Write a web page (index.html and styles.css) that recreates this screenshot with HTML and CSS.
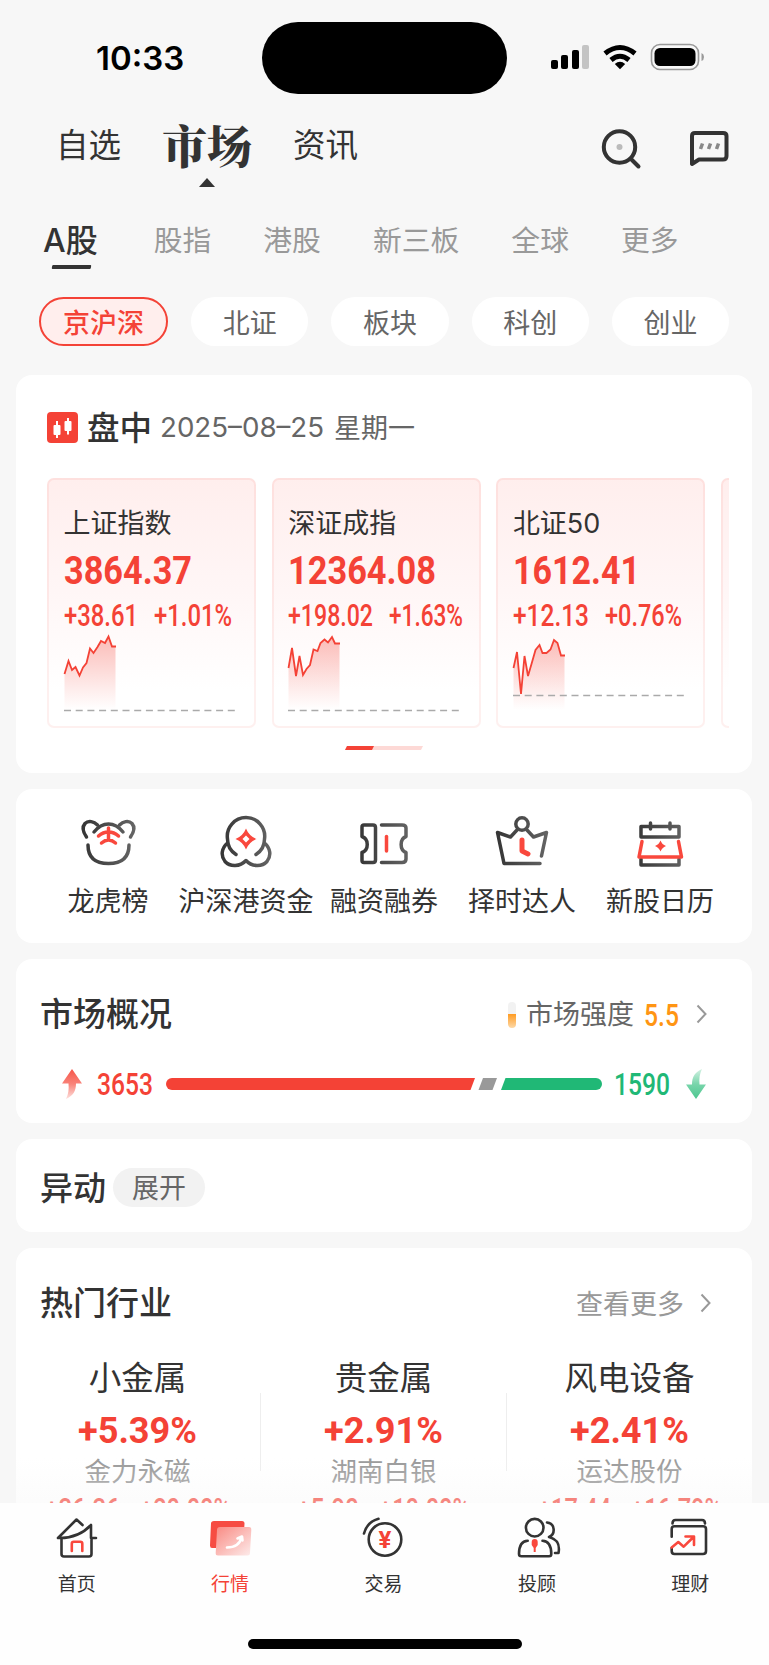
FILE: index.html
```
<!DOCTYPE html>
<html lang="zh-CN">
  <head>
    <meta charset="utf-8">
    <title>市场</title>
    <link rel="stylesheet" href="styles.css">
  </head>
  <body>
    <!-- gradients shared by the icons -->
    <svg class="defs" width="0" height="0">
      <defs>
        <linearGradient id="fall" x1="0" y1="0" x2="0" y2="1">
          <stop offset="0" stop-color="#f44236" stop-opacity=".34"/>
          <stop offset="1" stop-color="#f44236" stop-opacity="0"/>
        </linearGradient>
        <linearGradient id="ink" gradientUnits="userSpaceOnUse" x1="0" y1="0" x2="56" y2="0">
          <stop offset="0" stop-color="#333"/>
          <stop offset="1" stop-color="#666"/>
        </linearGradient>
        <linearGradient id="up" x1="0" y1="0" x2="0" y2="1">
          <stop offset="0" stop-color="#f65549"/>
          <stop offset=".5" stop-color="#f98379"/>
          <stop offset="1" stop-color="#fde0dd"/>
        </linearGradient>
        <linearGradient id="down" x1="0" y1="1" x2="0" y2="0">
          <stop offset="0" stop-color="#4cc78f"/>
          <stop offset=".5" stop-color="#79d5ab"/>
          <stop offset="1" stop-color="#d3f1e3"/>
        </linearGradient>
        <linearGradient id="front" x1="0" y1="0" x2="1" y2="1">
          <stop offset="0" stop-color="#f98a83"/>
          <stop offset="1" stop-color="#fdeceb"/>
        </linearGradient>
      </defs>
    </svg>

    <div class="status">
      <div class="time">10:33</div>
      <div class="island"></div>
      <svg class="signals" width="154" height="28" viewBox="0 0 154 28">
        <rect x="0" y="17" width="7" height="9" rx="2"/>
        <rect x="10" y="12" width="7" height="14" rx="2"/>
        <rect x="21" y="7" width="7" height="19" rx="2"/>
        <rect x="31" y="2" width="7" height="24" rx="2" fill="#c4c4c4"/>
        <g fill="none" stroke="#000" stroke-width="5">
          <path d="M54 10.500 Q69 -1.500 84 10.500"/>
          <path d="M60 17 Q69 9.500 78 17"/>
        </g>
        <path d="M63.800 21 Q69 16.500 74.200 21 L69 26.300z"/>
        <rect x="100.500" y="1.500" width="47" height="25" rx="8.500" fill="none" stroke="#999" stroke-width="1.600"/>
        <rect x="103.500" y="5" width="41" height="18" rx="5.500"/>
        <path d="M150.500 10 Q153 11 153 14 T150.500 18z" fill="#999"/>
      </svg>
    </div>

    <div class="nav">
      <span class="nav-item">自选</span>
      <span class="nav-item nav-on">市场</span>
      <span class="nav-item">资讯</span>
      <svg class="search" width="42" height="42" viewBox="0 0 42 42" fill="none" stroke="#333" stroke-width="4" stroke-linecap="round">
        <circle cx="18.500" cy="19" r="15.700"/>
        <path d="M30 31 L37.500 38.500"/>
        <circle cx="18.500" cy="19" r="3" fill="#bbb" stroke="none"/>
      </svg>
      <svg class="chat" width="42" height="42" viewBox="0 0 42 42" fill="none" stroke="#333" stroke-width="4" stroke-linecap="round" stroke-linejoin="round">
        <path d="M3 37 V9 Q3 6 6 6 H34 Q37.500 6 37.500 9 V29 Q37.500 32.500 34 32.500 H10z"/>
        <path d="M11.500 22 l2-5.500 M19.500 22 l2-5.500 M27.500 22 l2-5.500" stroke="#888" stroke-width="3.500" stroke-linecap="butt"/>
      </svg>
    </div>

    <div class="subnav">
      <span class="sub sub-on">A股</span>
      <span class="sub">股指</span>
      <span class="sub">港股</span>
      <span class="sub">新三板</span>
      <span class="sub">全球</span>
      <span class="sub">更多</span>
    </div>

    <div class="chips">
      <span class="chip chip-on">京沪深</span>
      <span class="chip">北证</span>
      <span class="chip">板块</span>
      <span class="chip">科创</span>
      <span class="chip">创业</span>
    </div>

    <div class="card market">
      <div class="market-head">
        <svg width="31" height="31" viewBox="0 0 31 31">
          <rect width="31" height="31" rx="4" fill="#f44236"/>
          <path d="M10 9v17M21 6v16.500" stroke="#fff" stroke-width="2"/>
          <rect x="6.500" y="13" width="7" height="10" rx="1" fill="#fff"/>
          <rect x="17.500" y="9" width="7" height="10" rx="1" fill="#fff"/>
        </svg>
        <b>盘中</b>
        <span class="date">2025–08–25</span>
        <span class="week">星期一</span>
      </div>
      <div class="indexes">
        <div class="index">
          <div class="index-name">上证指数</div>
          <svg class="num price" width="128" height="27"><text y="27" textLength="128" lengthAdjust="spacingAndGlyphs">3864.37</text></svg>
          <div class="change">
            <svg class="num" width="74" height="22"><text y="22" textLength="74" lengthAdjust="spacingAndGlyphs">+38.61</text></svg>
            <svg class="num" width="78" height="22"><text y="22" textLength="78" lengthAdjust="spacingAndGlyphs">+1.01%</text></svg>
          </div>
          <svg class="chart" width="171" height="80">
            <path d="M.5 39 L4.500 26 8 35 11.500 32 15.500 40.500 19 32.500 22.500 28 26 13.500 29.500 18 33.500 12 37 6 41 8 44.500 1.500 48 11.500 H51.500 V75 H.5z" fill="url(#fall)"/>
            <path class="line" d="M.5 39 L4.500 26 8 35 11.500 32 15.500 40.500 19 32.500 22.500 28 26 13.500 29.500 18 33.500 12 37 6 41 8 44.500 1.500 48 11.500 H52"/>
            <path class="dash" d="M0 75.500 H171"/>
          </svg>
        </div>
        <div class="index">
          <div class="index-name">深证成指</div>
          <svg class="num price" width="148" height="27"><text y="27" textLength="148" lengthAdjust="spacingAndGlyphs">12364.08</text></svg>
          <div class="change">
            <svg class="num" width="85" height="22"><text y="22" textLength="85" lengthAdjust="spacingAndGlyphs">+198.02</text></svg>
            <svg class="num" width="74" height="22"><text y="22" textLength="74" lengthAdjust="spacingAndGlyphs">+1.63%</text></svg>
          </div>
          <svg class="chart" width="171" height="80">
            <path d="M.5 33 L4 13 8 41 11.500 21 15 40 18.500 34 22 30 25.500 14.500 29.500 16 32.500 8 36.500 4.500 40 7.500 44 2 47 8.500 H51.500 V75 H.5z" fill="url(#fall)"/>
            <path class="line" d="M.5 33 L4 13 8 41 11.500 21 15 40 18.500 34 22 30 25.500 14.500 29.500 16 32.500 8 36.500 4.500 40 7.500 44 2 47 8.500 H52"/>
            <path class="dash" d="M0 75.500 H171"/>
          </svg>
        </div>
        <div class="index">
          <div class="index-name">北证50</div>
          <svg class="num price" width="127" height="27"><text y="27" textLength="127" lengthAdjust="spacingAndGlyphs">1612.41</text></svg>
          <div class="change">
            <svg class="num" width="76" height="22"><text y="22" textLength="76" lengthAdjust="spacingAndGlyphs">+12.13</text></svg>
            <svg class="num" width="77" height="22"><text y="22" textLength="77" lengthAdjust="spacingAndGlyphs">+0.76%</text></svg>
          </div>
          <svg class="chart" width="171" height="80">
            <path d="M.5 33 L4 17 8 59 11.500 21 15 41 18.500 29 22.500 15 26.500 10 29.500 18 H33.500 L37.500 14.500 41 5 44.500 8 48 20.500 H51.500 V75 H.5z" fill="url(#fall)"/>
            <path class="line" d="M.5 33 L4 17 8 59 11.500 21 15 41 18.500 29 22.500 15 26.500 10 29.500 18 H33.500 L37.500 14.500 41 5 44.500 8 48 20.500 H52"/>
            <path class="dash" d="M0 60.500 H171"/>
          </svg>
        </div>
        <div class="index"></div>
      </div>
      <svg class="pager" width="78" height="4">
        <path d="M2 0 H78 L76 4 H0z" fill="#fdd9d6"/>
        <path d="M2 0 H29 L27 4 H0z" fill="#f44236"/>
      </svg>
    </div>

    <div class="card shortcuts">
      <div class="shortcut">
        <svg viewBox="0 0 56 56">
          <path d="M6.500 24 C3 19 2 14 5 10.500 C8.500 7 14 8.500 17.500 12 M50.500 24 C54 19 55 14 52 10.500 C48.500 7 43 8.500 39.500 12"/>
          <path d="M14 19 C18 14 22 11 28.500 11 S39 14 43 19 M8 32 C8 44 15 50.500 28.500 50.500 S49 44 49 32"/>
          <path class="red" d="M28.500 15 V26 M18.500 23 Q23 19 28.500 19 T38.500 23 M21.500 30 Q28.500 24 35.500 30"/>
        </svg>
        <span>龙虎榜</span>
      </div>
      <div class="shortcut">
        <svg viewBox="0 0 56 56">
          <path d="M18 41.500 C11 37 9.500 32 9.500 26 A18.700 18.700 0 1 1 46.500 26 C46.500 32 45 37 38 41.500"/>
          <path d="M9.500 30 C3.500 35 2.500 43 7 48.500 C12 54 22 54 28 47.500 C34 54 44 54 49 48.500 C53.500 43 52.500 35 46.500 30"/>
          <path class="redfill" d="M28 15.500 Q31 23 38.500 26 Q31 29 28 36.500 Q25 29 17.500 26 Q25 23 28 15.500z"/>
          <path d="M28 22.500 L31.500 26 28 29.500 24.500 26z" fill="#fff" stroke="none"/>
        </svg>
        <span>沪深港资金</span>
      </div>
      <div class="shortcut">
        <svg viewBox="0 0 56 56">
          <path d="M8 12 H17 Q19.500 12 19.500 14.500 V47 Q19.500 49.500 17 49.500 H8 Q6 49.500 6 47.500 V39.500 C13 37 13 26 6 23.500 V14 Q6 12 8 12z"/>
          <path d="M25.500 12 H46 Q50 12 50 15 V23.500 C43.500 26 43.500 37 50 39.500 V46 Q50 49.500 46 49.500 H25.500"/>
          <path class="red" d="M30.500 23.500 V38"/>
        </svg>
        <span>融资融券</span>
      </div>
      <div class="shortcut">
        <svg viewBox="0 0 56 56">
          <circle cx="28" cy="11" r="6.200"/>
          <path d="M23 17 L16.500 24 L3.500 19.500 L10 50.500 H46 M33 17 L39.500 24 L52.500 19.500 L47.500 43"/>
          <path class="red thick" d="M28 27 V38 L34 41"/>
        </svg>
        <span>择时达人</span>
      </div>
      <div class="shortcut">
        <svg viewBox="0 0 56 56">
          <path d="M9 13.500 H47 V24 H9z M18.500 10 V16 M38 10 V16 M9 46 V52 H47 V46"/>
          <path class="red" d="M10 28.500 L7 44 H49.500 L46.500 28.500"/>
          <path class="redfill" d="M28.500 27.500 Q30 31.500 34 33 Q30 34.500 28.500 38.500 Q27 34.500 23 33 Q27 31.500 28.500 27.500z"/>
        </svg>
        <span>新股日历</span>
      </div>
    </div>

    <div class="card overview">
      <div class="title-row">
        <h2>市场概况</h2>
        <div class="strength">
          <span class="gauge"></span>
          <span>市场强度</span>
          <svg class="num orange" width="35" height="22"><text y="22" textLength="35" lengthAdjust="spacingAndGlyphs">5.5</text></svg>
        </div>
        <svg class="arrow" width="11" height="20" viewBox="0 0 11 20"><path d="M1.500 1.500 L9.500 10 1.500 18.500"/></svg>
      </div>
      <div class="updown">
        <svg width="22" height="30" viewBox="0 0 22 30"><path d="M11 0 L21 14.500 H15 C15 22 12 27 5 30 C7.500 25 8 20 7.500 14.500 H1z" fill="url(#up)"/></svg>
        <svg class="num rise" width="56" height="22"><text y="22" textLength="56" lengthAdjust="spacingAndGlyphs">3653</text></svg>
        <svg class="bar" width="436" height="12">
          <path d="M6 0 H309 L304.500 12 H6 A6 6 0 0 1 6 0z" fill="#f44236"/>
          <path d="M317 0 H331 L326.500 12 H312.500z" fill="#999"/>
          <path d="M339.500 0 H430 A6 6 0 0 1 430 12 H335z" fill="#20b876"/>
        </svg>
        <svg class="num fallen" width="56" height="22"><text y="22" textLength="56" lengthAdjust="spacingAndGlyphs">1590</text></svg>
        <svg width="22" height="30" viewBox="0 0 22 30"><path d="M11 30 L1 15.500 H7 C7 8 10 3 17 0 C14.500 5 14 10 14.500 15.500 H21z" fill="url(#down)"/></svg>
      </div>
    </div>

    <div class="card moves">
      <h2>异动</h2>
      <span class="expand">展开</span>
    </div>

    <div class="card hot">
      <div class="title-row">
        <h2>热门行业</h2>
        <span class="more">查看更多</span>
        <svg class="arrow" width="11" height="20" viewBox="0 0 11 20"><path d="M1.500 1.500 L9.500 10 1.500 18.500"/></svg>
      </div>
      <div class="sectors">
        <div class="sector">
          <div class="sector-name">小金属</div>
          <svg class="num pct" width="119" height="26"><text y="26" textLength="119" lengthAdjust="spacingAndGlyphs">+5.39%</text></svg>
          <div class="stock">金力永磁</div>
          <div class="quote">
            <svg class="num" width="75" height="22"><text y="22" textLength="75" lengthAdjust="spacingAndGlyphs">+36.36</text></svg>
            <svg class="num" width="91" height="22"><text y="22" textLength="91" lengthAdjust="spacingAndGlyphs">+20.00%</text></svg>
          </div>
        </div>
        <div class="sector">
          <div class="sector-name">贵金属</div>
          <svg class="num pct" width="119" height="26"><text y="26" textLength="119" lengthAdjust="spacingAndGlyphs">+2.91%</text></svg>
          <div class="stock">湖南白银</div>
          <div class="quote">
            <svg class="num" width="62" height="22"><text y="22" textLength="62" lengthAdjust="spacingAndGlyphs">+5.90</text></svg>
            <svg class="num" width="91" height="22"><text y="22" textLength="91" lengthAdjust="spacingAndGlyphs">+10.00%</text></svg>
          </div>
        </div>
        <div class="sector">
          <div class="sector-name">风电设备</div>
          <svg class="num pct" width="119" height="26"><text y="26" textLength="119" lengthAdjust="spacingAndGlyphs">+2.41%</text></svg>
          <div class="stock">运达股份</div>
          <div class="quote">
            <svg class="num" width="73" height="22"><text y="22" textLength="73" lengthAdjust="spacingAndGlyphs">+17.44</text></svg>
            <svg class="num" width="91" height="22"><text y="22" textLength="91" lengthAdjust="spacingAndGlyphs">+16.79%</text></svg>
          </div>
        </div>
      </div>
    </div>

    <div class="tabbar">
      <div class="fade"></div>
      <div class="tabs">
        <div class="tab">
          <svg viewBox="0 0 48 48">
            <path d="M29.500 11 L23.500 5.500 L5 24 C18 24.500 29 20.500 38 11 V24 L43 24 M8.500 24 V40 Q8.500 42.500 11 42.500 H36 Q38.500 42.500 38.500 40 V24"/>
            <path class="red" d="M18.800 37 V29.800 Q18.800 27.800 20.800 27.800 H27.300 Q29.300 27.800 29.300 29.800 V37"/>
          </svg>
          <span>首页</span>
        </div>
        <div class="tab tab-on">
          <svg viewBox="0 0 48 48">
            <path d="M8 7 H36 Q38.500 7 38.500 9.500 L37 34 H6 Q4 34 4 31.500 L5 9.500 Q5 7 8 7z" fill="#f64c43" stroke="none"/>
            <path d="M14 13 H43 Q45.500 13 45.300 16 L44 39 Q44 41.500 41.500 41.500 H12 Q9.500 41.500 9.700 39 L11 16 Q11 13 14 13z" fill="url(#front)" stroke="none"/>
            <path d="M21 33.500 Q33 33.500 35.500 23.500 M31.500 24.500 L36 22.500 36.500 26.500" stroke="#fff"/>
          </svg>
          <span>行情</span>
        </div>
        <div class="tab">
          <svg viewBox="0 0 48 48">
            <circle cx="25" cy="25.500" r="16.300"/>
            <path d="M4 19.500 Q7 8 18.500 4.800"/>
            <text class="yen" x="25" y="34">¥</text>
          </svg>
          <span>交易</span>
        </div>
        <div class="tab">
          <svg viewBox="0 0 48 48">
            <circle cx="21.700" cy="13.700" r="8.800"/>
            <path d="M14.700 26.700 C8 27 6 32 6 40 Q6 42.300 8.500 42.300 H36 Q38.300 42.300 38.300 40 C38.300 32 36 27 29.500 26.700"/>
            <path d="M34 8.500 C42.500 9.500 42.500 20.500 36 23 C45 25.500 47 31 45.500 39 H42"/>
            <path class="redfill" d="M18.700 28 Q18.700 25 21.700 25 T24.700 28 V31 L22.700 34 V38 H20.700 V34 L18.700 31z"/>
          </svg>
          <span>投顾</span>
        </div>
        <div class="tab">
          <svg viewBox="0 0 48 48">
            <path d="M6.500 9.500 Q6.500 6 9.500 6 H36 Q39 6 39 9.500 M5.700 22.700 V15 Q5.700 12.300 8.500 12.300 H37 Q40 12.300 40 15 V37 Q40 40 37 40 H8.500 Q5.700 40 5.700 37 V34"/>
            <path class="red" d="M5.700 33.500 L12.300 28 L17.700 32.700 L27.500 23 M19.500 22.500 H28 V31"/>
          </svg>
          <span>理财</span>
        </div>
      </div>
      <div class="home"></div>
    </div>
  </body>
</html>
```

FILE: styles.css
```
* {
  box-sizing: border-box;
}
body {
  margin: 0;
  height: 1665px;
  overflow: hidden;
  position: relative;
  background: #f7f7f7;
  color: #333;
  font-family: Inter, "Noto Sans CJK SC", sans-serif;
}
svg {
  display: block;
  flex: none;
  overflow: visible;
}
.defs {
  position: absolute;
}
h2 {
  margin: 0;
  font-size: 33px;
  font-weight: 500;
  line-height: 40px;
}

/* condensed figures */
.num {
  fill: #f44236;
  font-family: Roboto, sans-serif;
  font-size: 30.5px;
  font-weight: 500;
}
.num.price {
  font-size: 38px;
  font-weight: 700;
}
.num.pct {
  font-size: 36.5px;
  font-weight: 700;
}
.num.orange {
  fill: #ff9513;
}
.num.fallen {
  fill: #20b876;
}

/* status bar */
.status {
  display: flex;
  align-items: center;
  height: 116px;
  padding-left: 96px;
}
.time {
  width: 166px;
  font-size: 33px;
  font-weight: 600;
  line-height: 40px;
  color: #000;
}
.island {
  width: 245px;
  height: 72px;
  border-radius: 36px;
  background: #000;
}
.signals {
  margin: -2px 0 0 44px;
}

/* top navigation */
.nav {
  display: flex;
  align-items: flex-start;
  height: 94px;
  padding: 5px 38px 0 56px;
}
.nav-item {
  font-size: 32.5px;
  line-height: 50px;
}
.nav-on {
  position: relative;
  margin: 0 41px 0 41px;
  font-family: "Noto Serif CJK SC", "Noto Sans CJK SC", serif;
  font-size: 45px;
  font-weight: 900;
  line-height: 48px;
}
.nav-on::after {
  content: "";
  position: absolute;
  left: 37px;
  top: 57px;
  border: solid transparent;
  border-width: 0 8px 9px;
  border-bottom-color: #333;
}
.search {
  margin: 7px 46px 0 auto;
}
.chat {
  margin-top: 6px;
}

.subnav {
  display: flex;
  align-items: center;
  height: 62px;
  padding-left: 43px;
}
.sub {
  margin-right: 52px;
  font-size: 28.8px;
  line-height: 40px;
  color: #999;
}
.sub-on {
  position: relative;
  margin-right: 56px;
  font-size: 32px;
  font-weight: 500;
  color: #333;
}
.sub-on::after {
  content: "";
  position: absolute;
  left: 9px;
  bottom: -8px;
  width: 39px;
  height: 4px;
  border-radius: 1px;
  background: #333;
  transform: skewX(-10deg);
}

.chips {
  display: flex;
  gap: 23px;
  margin-top: 25px;
  padding-left: 39px;
}
.chip {
  width: 117.3px;
  height: 49px;
  border-radius: 25px;
  background: #fff;
  color: #666;
  font-size: 27px;
  line-height: 53px;
  text-align: center;
}
.chip-on {
  width: 129px;
  border: 2px solid #f44236;
  background: #ffeeed;
  color: #f44236;
  font-weight: 500;
  line-height: 49px;
}

.card {
  margin: 0 17px 16px 16px;
  border-radius: 16px;
  background: #fff;
}

/* indexes */
.market {
  height: 398px;
  margin-top: 29px;
  padding: 32px 23px 0 31px;
}
.market-head {
  display: flex;
  align-items: center;
  height: 40px;
}
.market-head b {
  margin: -3px 0 0 9px;
  font-size: 32.5px;
  font-weight: 500;
}
.date,
.week {
  margin-left: 8px;
  font-size: 27px;
  color: #666;
}
.date {
  font-size: 27.7px;
}
.week {
  margin: -1px 0 0 10px;
}
.indexes {
  display: flex;
  gap: 15.7px;
  height: 250px;
  margin-top: 31px;
  overflow: hidden;
}
.index {
  flex: none;
  width: 209px;
  padding: 26px 0 0 14.5px;
  border: 2px solid rgba(244, 66, 54, .08);
  border-radius: 7px;
  background: linear-gradient(#ffeeed, #fff6f6 45%, #fff 85%) border-box;
}
.index-name {
  margin-bottom: 15px;
  font-size: 27px;
  line-height: 36px;
}
.change {
  display: flex;
  gap: 16px;
  margin: 20px 0 9px;
}
.line {
  fill: none;
  stroke: #f44236;
  stroke-width: 1.8;
}
.dash {
  stroke: #aaa;
  stroke-width: 1.3;
  stroke-dasharray: 7 4.7;
}
.pager {
  margin: 18px auto 0 298px;
}

/* shortcuts */
.shortcuts {
  display: flex;
  height: 154px;
  padding: 24px 23px 0;
}
.shortcut {
  display: flex;
  flex: 1 0 137.8px;
  flex-direction: column;
  align-items: center;
  font-size: 27px;
  line-height: 36px;
  white-space: nowrap;
}
.shortcut svg {
  width: 56px;
  height: 56px;
  margin-bottom: 15px;
  fill: none;
  stroke: url(#ink);
  stroke-width: 3.5;
  stroke-linecap: round;
  stroke-linejoin: round;
}
svg .red {
  stroke: #f9483d;
}
svg .thick {
  stroke-width: 5;
}
svg .redfill {
  fill: #f9483d;
  stroke: none;
}

/* overview */
.title-row {
  display: flex;
  align-items: center;
  height: 40px;
}
.arrow {
  fill: none;
  stroke: #999;
  stroke-width: 2;
}
.overview {
  height: 164px;
  padding: 35px 45px 0 24px;
}
.strength {
  display: flex;
  align-items: center;
  margin: 2px 17px 0 auto;
  font-size: 27px;
  line-height: 38px;
  color: #666;
}
.gauge {
  width: 8px;
  height: 26px;
  margin-right: 10px;
  border-radius: 4px;
  background: linear-gradient(#f2f2f2 45%, #ff9a1f 45%, #fdd9a8);
}
.strength .num {
  margin-left: 10px;
}
.updown {
  display: flex;
  align-items: center;
  margin: 35px 0 0 21px;
}
.updown .rise {
  margin-left: 14px;
}
.updown .bar {
  margin: 0 12px 0 13px;
}
.updown .fallen {
  margin-right: 15px;
}

.moves {
  display: flex;
  align-items: center;
  height: 93px;
  padding: 4px 0 0 24px;
}
.expand {
  width: 92px;
  height: 39px;
  margin-left: 7px;
  border-radius: 20px;
  background: #f2f2f2;
  color: #666;
  font-size: 27px;
  line-height: 41px;
  text-align: center;
}

/* hot sectors */
.hot {
  height: 300px;
  padding: 35px 41px 0 24px;
}
.more {
  margin: -2px 16px 0 auto;
  font-size: 27px;
  color: #999;
}
.sectors {
  display: flex;
  width: 738px;
  margin: 35px 0 0 -25.5px;
}
.sector {
  position: relative;
  display: flex;
  flex: none;
  flex-direction: column;
  align-items: center;
  width: 246px;
}
.sector + .sector::before {
  content: "";
  position: absolute;
  left: -1px;
  top: 35px;
  width: 1.5px;
  height: 78px;
  background: #eee;
}
.sector-name {
  margin-bottom: 17px;
  font-size: 32.5px;
  line-height: 42px;
}
.stock {
  margin: 10px 0 9px;
  font-size: 26.5px;
  line-height: 36px;
  color: #999;
}
.quote {
  display: flex;
  gap: 20px;
}

/* bottom bar */
.tabbar {
  position: absolute;
  left: 0;
  bottom: 0;
  width: 100%;
  height: 162px;
  padding-top: 11px;
  background: #fefefe;
}
.fade {
  position: absolute;
  left: 0;
  bottom: 100%;
  width: 100%;
  height: 45px;
  background: linear-gradient(rgba(247, 247, 247, 0), rgba(247, 247, 247, .4));
}
.tabs {
  display: flex;
  width: 767px;
}
.tab {
  display: flex;
  flex: 1;
  flex-direction: column;
  align-items: center;
  font-size: 19px;
  line-height: 28px;
}
.tab svg {
  width: 48px;
  height: 48px;
  margin-bottom: 9px;
  fill: none;
  stroke: #333;
  stroke-width: 2.6;
  stroke-linecap: round;
  stroke-linejoin: round;
}
.tab-on {
  color: #f44236;
}
.tab .yen {
  fill: #f44236;
  stroke: none;
  font-family: Roboto, sans-serif;
  font-size: 24px;
  font-weight: 700;
  text-anchor: middle;
}
.home {
  width: 274px;
  height: 10px;
  margin: 40px 0 0 248px;
  border-radius: 5px;
  background: #000;
}
```
